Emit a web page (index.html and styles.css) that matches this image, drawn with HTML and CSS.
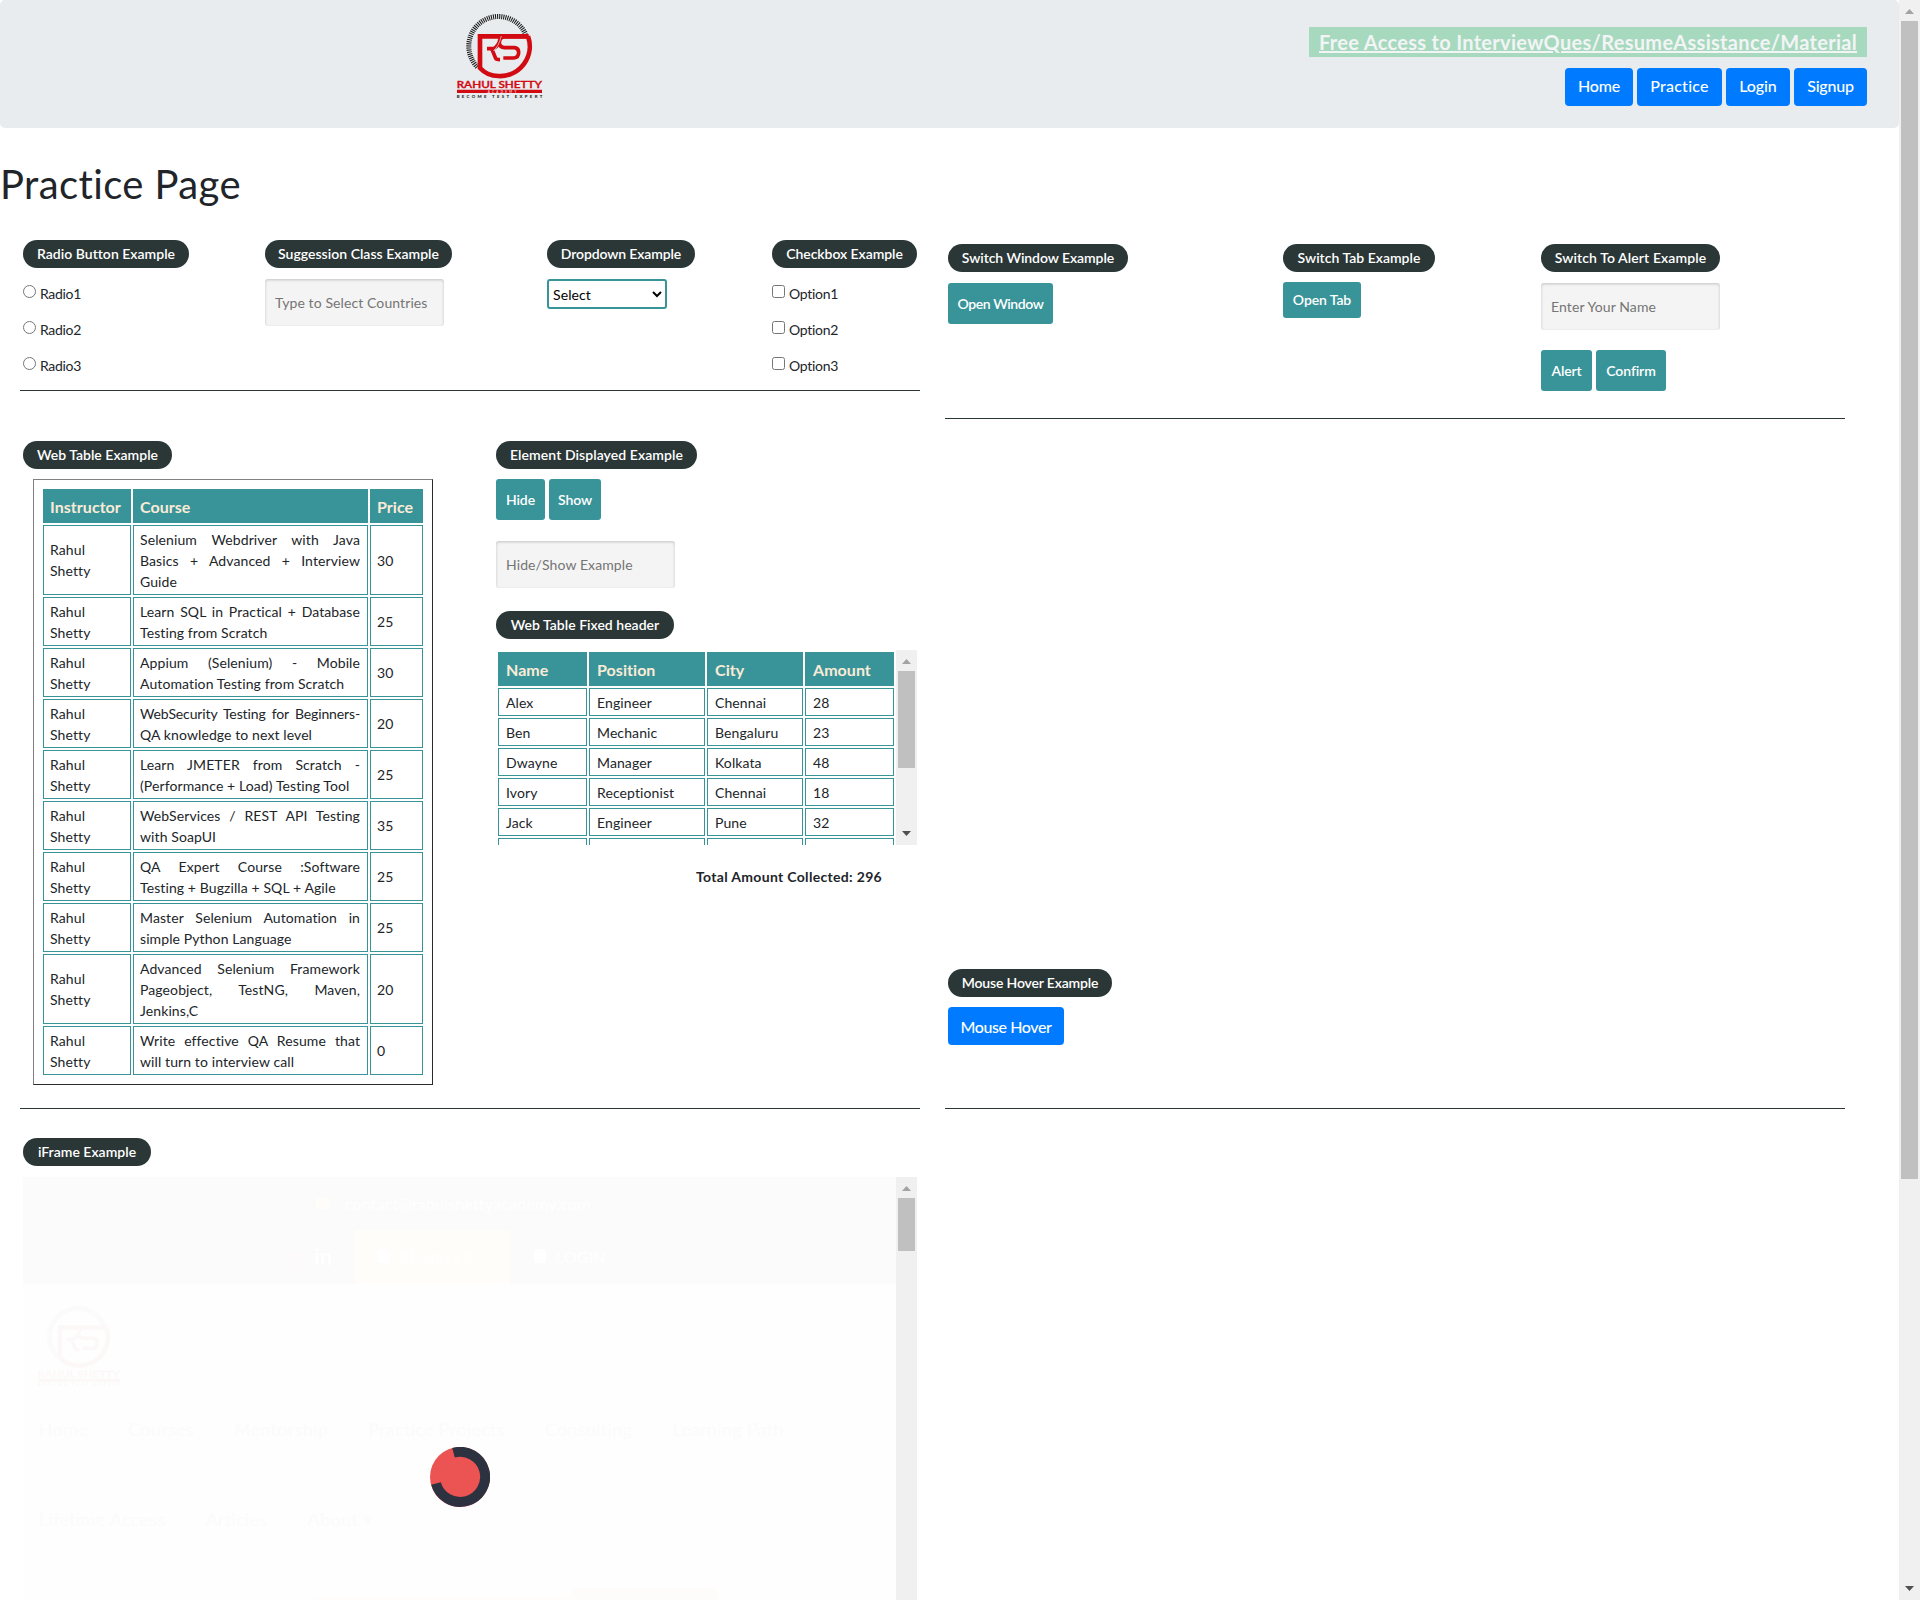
FILE: index.html
```html
<!DOCTYPE html>
<html lang="en">
<head>
<meta charset="utf-8">
<title>Practice Page</title>
<link rel="stylesheet" href="styles.css">
</head>
<body>
<div class="window">
  <div class="page">
    <header class="top">
      <svg class="logo" viewBox="78 40 262 256">
        <g id="logo">
          <path d="M142 202A89 89 0 1 1 287 104" fill="none" stroke="#1c1c1c" stroke-width="15" stroke-dasharray="3.2 3"/>
          <path d="M294 110A89 89 0 0 1 205 229Q172 229 150 205V110H296" fill="none" stroke="#d20a11" stroke-width="14"/>
          <path d="M212 112Q207 140 190 147H171M186 149L197 176Q198 180 210 180M295 111H222Q208 114 208 130Q209 143 224 144H254Q266 146 266 158Q266 174 252 175H220" fill="none" stroke="#d20a11" stroke-width="11"/>
          <path d="M214 109Q206 142 190 153" fill="none" stroke="#e9ecef" stroke-width="2"/>
          <text x="80" y="265" class="logo-name" textLength="256" lengthAdjust="spacingAndGlyphs">RAHUL SHETTY</text>
          <path d="M81 270H336V280H81Z" fill="#d20a11"/>
          <text x="173" y="279" class="logo-academy" textLength="86">ACADEMY</text>
          <text x="80" y="294" class="logo-tag" textLength="257">BECOME TEST EXPERT</text>
        </g>
      </svg>
      <div class="top-links">
        <a class="promo">Free Access to InterviewQues/ResumeAssistance/Material</a>
        <nav class="nav">
          <button class="btn home">Home</button>
          <button class="btn practice">Practice</button>
          <button class="btn login">Login</button>
          <button class="btn signup">Signup</button>
        </nav>
      </div>
    </header>
    <h1>Practice Page</h1>
    <main class="columns">
      <div class="column">
        <section class="row basics">
          <div>
            <span class="pill w166">Radio Button Example</span>
            <label class="choice"><input type="radio" name="r">Radio1</label>
            <label class="choice"><input type="radio" name="r">Radio2</label>
            <label class="choice"><input type="radio" name="r">Radio3</label>
          </div>
          <div>
            <span class="pill w187">Suggession Class Example</span>
            <input class="field" type="text" placeholder="Type to Select Countries">
          </div>
          <div>
            <span class="pill w148">Dropdown Example</span>
            <select class="select"><option>Select</option></select>
          </div>
          <div>
            <span class="pill w145">Checkbox Example</span>
            <label class="choice"><input type="checkbox">Option1</label>
            <label class="choice"><input type="checkbox">Option2</label>
            <label class="choice"><input type="checkbox">Option3</label>
          </div>
        </section>
        <section class="row tables">
          <div>
            <span class="pill w149">Web Table Example</span>
            <table class="courses">
              <colgroup><col class="c88"><col class="c235"><col class="c53"></colgroup>
              <tr><th>Instructor</th><th>Course</th><th>Price</th></tr>
              <tr><td>Rahul Shetty</td><td>Selenium Webdriver with Java Basics + Advanced + Interview Guide</td><td>30</td></tr>
              <tr><td>Rahul Shetty</td><td>Learn SQL in Practical + Database Testing from Scratch</td><td>25</td></tr>
              <tr><td>Rahul Shetty</td><td>Appium (Selenium) - Mobile Automation Testing from Scratch</td><td>30</td></tr>
              <tr><td>Rahul Shetty</td><td><span class="tight">WebSecurity Testing for Beginners-</span>QA knowledge to next level</td><td>20</td></tr>
              <tr><td>Rahul Shetty</td><td>Learn JMETER from Scratch - (Performance + Load) Testing Tool</td><td>25</td></tr>
              <tr><td>Rahul Shetty</td><td>WebServices / REST API Testing with SoapUI</td><td>35</td></tr>
              <tr><td>Rahul Shetty</td><td>QA Expert Course :Software Testing + Bugzilla + SQL + Agile</td><td>25</td></tr>
              <tr><td>Rahul Shetty</td><td>Master Selenium Automation in simple Python Language</td><td>25</td></tr>
              <tr><td>Rahul Shetty</td><td>Advanced Selenium Framework Pageobject, TestNG, Maven, Jenkins,C</td><td>20</td></tr>
              <tr><td>Rahul Shetty</td><td>Write effective QA Resume that will turn to interview call</td><td>0</td></tr>
            </table>
          </div>
          <div>
            <span class="pill w201">Element Displayed Example</span>
            <div class="actions">
              <button class="act w49">Hide</button>
              <button class="act w52">Show</button>
            </div>
            <input class="field toggle-field" type="text" placeholder="Hide/Show Example">
            <span class="pill w178">Web Table Fixed header</span>
            <div class="fixed-wrap">
              <table class="people">
                <colgroup><col class="c89"><col class="c116"><col class="c96"><col class="c89"></colgroup>
                <tr><th>Name</th><th>Position</th><th>City</th><th>Amount</th></tr>
                <tr><td>Alex</td><td>Engineer</td><td>Chennai</td><td>28</td></tr>
                <tr><td>Ben</td><td>Mechanic</td><td>Bengaluru</td><td>23</td></tr>
                <tr><td>Dwayne</td><td>Manager</td><td>Kolkata</td><td>48</td></tr>
                <tr><td>Ivory</td><td>Receptionist</td><td>Chennai</td><td>18</td></tr>
                <tr><td>Jack</td><td>Engineer</td><td>Pune</td><td>32</td></tr>
                <tr><td>&nbsp;</td><td></td><td></td><td></td></tr>
              </table>
              <div class="bar">
                <svg class="arrow up" viewBox="0 0 9 5"><path d="M0 5L4.5 0L9 5Z"/></svg>
                <div class="thumb people-thumb"></div>
                <svg class="arrow down" viewBox="0 0 9 5"><path d="M0 0L4.5 5L9 0Z"/></svg>
              </div>
            </div>
            <p class="total">Total Amount Collected: 296</p>
          </div>
        </section>
        <section class="frame-section">
          <span class="pill w128">iFrame Example</span>
          <div class="frame">
            <div class="site">
              <div class="site-top">
                <div class="mail"><i></i>contact@rahulshettyacademy.com</div>
                <div class="account">
                  <span class="social"><i></i><b>in</b></span>
                  <span class="register"><i></i>REGISTER</span>
                  <span class="signin"><i></i>LOGIN</span>
                </div>
              </div>
              <svg class="site-logo" viewBox="78 40 262 256"><use href="#logo"/></svg>
              <div class="site-nav"><span>Home</span><span>Courses</span><span>Mentorship</span><span>Practice Projects</span><span>Consulting</span><span>Learning Path</span></div>
              <svg class="spinner" viewBox="0 0 60 60">
                <circle cx="30" cy="30" r="30" fill="#ec5453"/>
                <path d="M23.5 5.8A25 25 0 1 1 6 36.5" fill="none" stroke="#2c323f" stroke-width="10"/>
              </svg>
              <div class="site-nav"><span>Lifetime Access</span><span>Articles</span><span>About &#9662;</span></div>
              <div class="banner"><i></i></div>
            </div>
            <div class="bar">
              <svg class="arrow up" viewBox="0 0 9 5"><path d="M0 5L4.5 0L9 5Z"/></svg>
              <div class="thumb frame-thumb"></div>
            </div>
          </div>
        </section>
      </div>
      <div class="column">
        <section class="row switches">
          <div>
            <span class="pill w180">Switch Window Example</span>
            <button class="act w105">Open Window</button>
          </div>
          <div>
            <span class="pill w152">Switch Tab Example</span>
            <button class="act tab w78">Open Tab</button>
          </div>
          <div>
            <span class="pill w179">Switch To Alert Example</span>
            <input class="field" type="text" placeholder="Enter Your Name">
            <div class="actions alert-actions">
              <button class="act w51">Alert</button>
              <button class="act w70">Confirm</button>
            </div>
          </div>
        </section>
        <section class="row hover">
          <div>
            <span class="pill w164">Mouse Hover Example</span>
            <button class="btn mouse">Mouse Hover</button>
          </div>
        </section>
      </div>
    </main>
  </div>
  <div class="bar page-bar">
    <svg class="arrow up" viewBox="0 0 9 5"><path d="M0 5L4.5 0L9 5Z"/></svg>
    <div class="thumb page-thumb"></div>
    <svg class="arrow down" viewBox="0 0 9 5"><path d="M0 0L4.5 5L9 0Z"/></svg>
  </div>
</div>
</body>
</html>
```
FILE: styles.css
```css
* { box-sizing: border-box; }
body {
  margin: 0;
  height: 1600px;
  overflow: hidden;
  background: #fff;
  color: #212529;
  font: 14px/21px "Trebuchet MS", Lato, sans-serif;
  font-variant-ligatures: none;
  letter-spacing: .1px;
}
button, input, select { font: inherit; letter-spacing: inherit; }
.window { display: flex; height: 1600px; overflow: hidden; }
.page { width: 1899px; height: 1600px; overflow: hidden; }

.top {
  display: flex;
  justify-content: space-between;
  height: 128px;
  padding: 13px 32px 0 456px;
  background: #e9ecef;
  border-radius: 5px;
}
.logo { width: 87.33px; height: 85.33px; }
.logo-name { font: 600 26px Lato, sans-serif; letter-spacing: 0; fill: #d20a11; stroke: #d20a11; }
.logo-academy { font: 9px Lato, sans-serif; fill: #fff; letter-spacing: 0; }
.logo-tag { font: 900 13px Lato, sans-serif; fill: #1c1c1c; letter-spacing: 0; }
.top-links { display: flex; flex-direction: column; align-items: flex-end; padding-top: 14px; }
.promo {
  height: 30px;
  width: 558px;
  padding-left: 10px;
  background: #a7d9bf;
  color: #f2f4f5;
  font-size: 20px;
  font-weight: 700;
  line-height: 31px;
  letter-spacing: .305px;
  text-decoration: underline;
  text-decoration-thickness: 2px;
  white-space: nowrap;
}
.nav { display: flex; gap: 4px; margin-top: 11px; }
.btn {
  height: 38px;
  padding: 0 0 3px;
  border: 0;
  border-radius: 4px;
  background: #007bff;
  color: #fff;
  font-size: 16px;
  font-weight: 500;
}
.home { width: 68px; letter-spacing: -.2px; }
.practice { width: 85px; letter-spacing: .25px; }
.login { width: 64px; letter-spacing: -.1px; }
.signup { width: 73px; letter-spacing: -.2px; }
.mouse { display: block; width: 116px; margin-top: 10px; padding-bottom: 0; letter-spacing: -.4px; }

h1 { margin: 32px 0 32px; font-size: 40px; font-weight: 400; line-height: 48px; letter-spacing: .4px; }

.columns { display: grid; grid-template-columns: 900px 900px; column-gap: 25px; padding-left: 20px; }
.row { display: grid; border-bottom: 1px solid #2b3737; padding-left: 3px; align-content: start; }
.basics { height: 151px; grid-template-columns: 242px 282px 225px 145px; }
.tables { height: 718px; padding-top: 50px; grid-template-columns: 473px 421px; }
.switches { height: 179px; padding-top: 4px; grid-template-columns: 335px 258px 179px; }
.hover { height: 690px; padding-top: 550px; }

.pill {
  display: block;
  height: 28px;
  border-radius: 14px;
  background: #2b3737;
  color: #fff;
  font-weight: 600;
  line-height: 28px;
  text-align: center;
  letter-spacing: .02px;
  white-space: nowrap;
}
.w166 { width: 166px; } .w187 { width: 187px; } .w148 { width: 148px; letter-spacing: -.12px; }
.w145 { width: 145px; letter-spacing: -.05px; } .w149 { width: 149px; } .w201 { width: 201px; letter-spacing: .08px; }
.w178 { width: 178px; } .w128 { width: 128px; } .w180 { width: 180px; letter-spacing: -.06px; }
.w152 { width: 152px; } .w179 { width: 179px; letter-spacing: .1px; } .w164 { width: 164px; letter-spacing: -.15px; }

.choice { display: flex; height: 21px; margin: 14px 0 15px; line-height: 23px; letter-spacing: -.3px; }
.choice + .choice { margin-top: 0; }
.choice input { width: 13px; height: 13px; margin: 3px 4px 0 0; }
.field {
  display: block;
  width: 179px;
  height: 47px;
  margin-top: 11px;
  padding: 0 10px;
  border: 0;
  border-radius: 3px;
  background: #f4f4f4;
  box-shadow: inset 0 1px 3px rgba(0, 0, 0, .2);
}
.field::placeholder { color: #757575; }
.select {
  display: block;
  width: 120px;
  height: 30px;
  margin-top: 11px;
  padding: 0;
  border: 2px solid #399499;
  border-radius: 3px;
  background: #fff;
  color: #000;
}
.act {
  display: block;
  height: 41px;
  margin-top: 11px;
  padding: 0 0 1px;
  border: 0;
  border-radius: 3px;
  background: #399499;
  color: #fff;
  font-weight: 600;
  letter-spacing: -.1px;
}
.actions { display: flex; gap: 4px; margin-top: 10px; }
.actions .act { margin: 0; }
.alert-actions { margin-top: 20px; }
.act.tab { height: 36px; margin-top: 10px; }
.w105 { width: 105px; letter-spacing: -.4px; } .w78 { width: 78px; } .w49 { width: 49px; } .w52 { width: 52px; }
.w51 { width: 51px; } .w70 { width: 70px; }
.toggle-field { margin: 21px 0 23px; }

table { border-collapse: separate; border-spacing: 2px; table-layout: fixed; }
th { height: 34px; padding: 1px 7px 0; background: #399499; color: #faebd7; font-size: 16px; font-weight: 700; line-height: 24px; text-align: left; letter-spacing: .05px; }
td { height: 28px; padding: 2.5px 7px 2.5px 6px; border: 1px solid #399499; }
.tight { letter-spacing: -.12px; }
.courses { width: 400px; margin: 10px 0 0 10px; padding: 7px; border: 1px solid; border-color: #808080 #2b2b2b #2b2b2b #808080; text-align: justify; }
.c88 { width: 88px; } .c235 { width: 235px; } .c53 { width: 53px; }
.c89 { width: 89px; } .c116 { width: 116px; } .c96 { width: 96px; }
.people { width: 400px; }
.people td { padding-left: 7px; }
.people th { padding-left: 8px; }
.fixed-wrap { display: flex; height: 195px; margin-top: 11px; overflow: hidden; }
.total { margin: 21px 0 0 200px; font-weight: 700; letter-spacing: .32px; }

.bar { display: flex; flex-direction: column; width: 21px; flex: none; padding: 9px 2px; background: #f0f0f0; }
.arrow { width: 9px; height: 5px; margin: 0 auto; flex: none; }
.up { fill: #a3a3a3; }
.down { fill: #505050; margin-top: auto; }
.thumb { width: 17px; margin-top: 7px; background: #c0c0c0; }
.people-thumb { height: 97px; }
.page-thumb { height: 1158px; }
.frame-thumb { height: 53px; }

.frame-section { padding: 29px 0 0 3px; }
.frame { display: flex; height: 423px; margin-top: 11px; overflow: hidden; }
.site { width: 873px; height: 423px; background: #fefefe; letter-spacing: .2px; }
.site-top { height: 107px; padding-top: 15px; background: #fbfbfb; color: #fff; }
.mail { display: flex; gap: 14px; align-items: center; justify-content: center; height: 22px; margin-left: -12px; font-size: 16px; }
.mail i { width: 14px; height: 11px; background: #fffdfa; }
.account { display: flex; height: 54px; margin-top: 16px; padding-left: 261px; font-size: 16px; line-height: 54px; }
.account i { display: inline-block; width: 12px; height: 14px; margin-right: 10px; background: #fff; border-radius: 5px 5px 2px 2px; }
.social { width: 71px; }
.social i { width: 20px; height: 20px; vertical-align: middle; background: #fcfafa; }
.social b { font-size: 22px; }
.register { width: 155px; padding-left: 22px; background: #fffdfa; }
.signin { padding-left: 24px; }
.site-logo { display: block; width: 84px; height: 82px; margin: 21px 0 30px 14px; opacity: .02; }
.site-nav { display: flex; gap: 40px; height: 24px; margin-left: 16px; font-size: 18px; line-height: 24px; letter-spacing: .3px; color: #fbfbfb; }
.spinner { display: block; width: 60px; height: 60px; margin: 6px 0 0 407px; }
.banner { display: flex; height: 4px; width: 405px; margin: 65px 0 0 291px; background: #fffdfb; }
.banner i { width: 146px; margin: -8px 0 0 258px; border-radius: 6px; background: #fefbfb; }
```
